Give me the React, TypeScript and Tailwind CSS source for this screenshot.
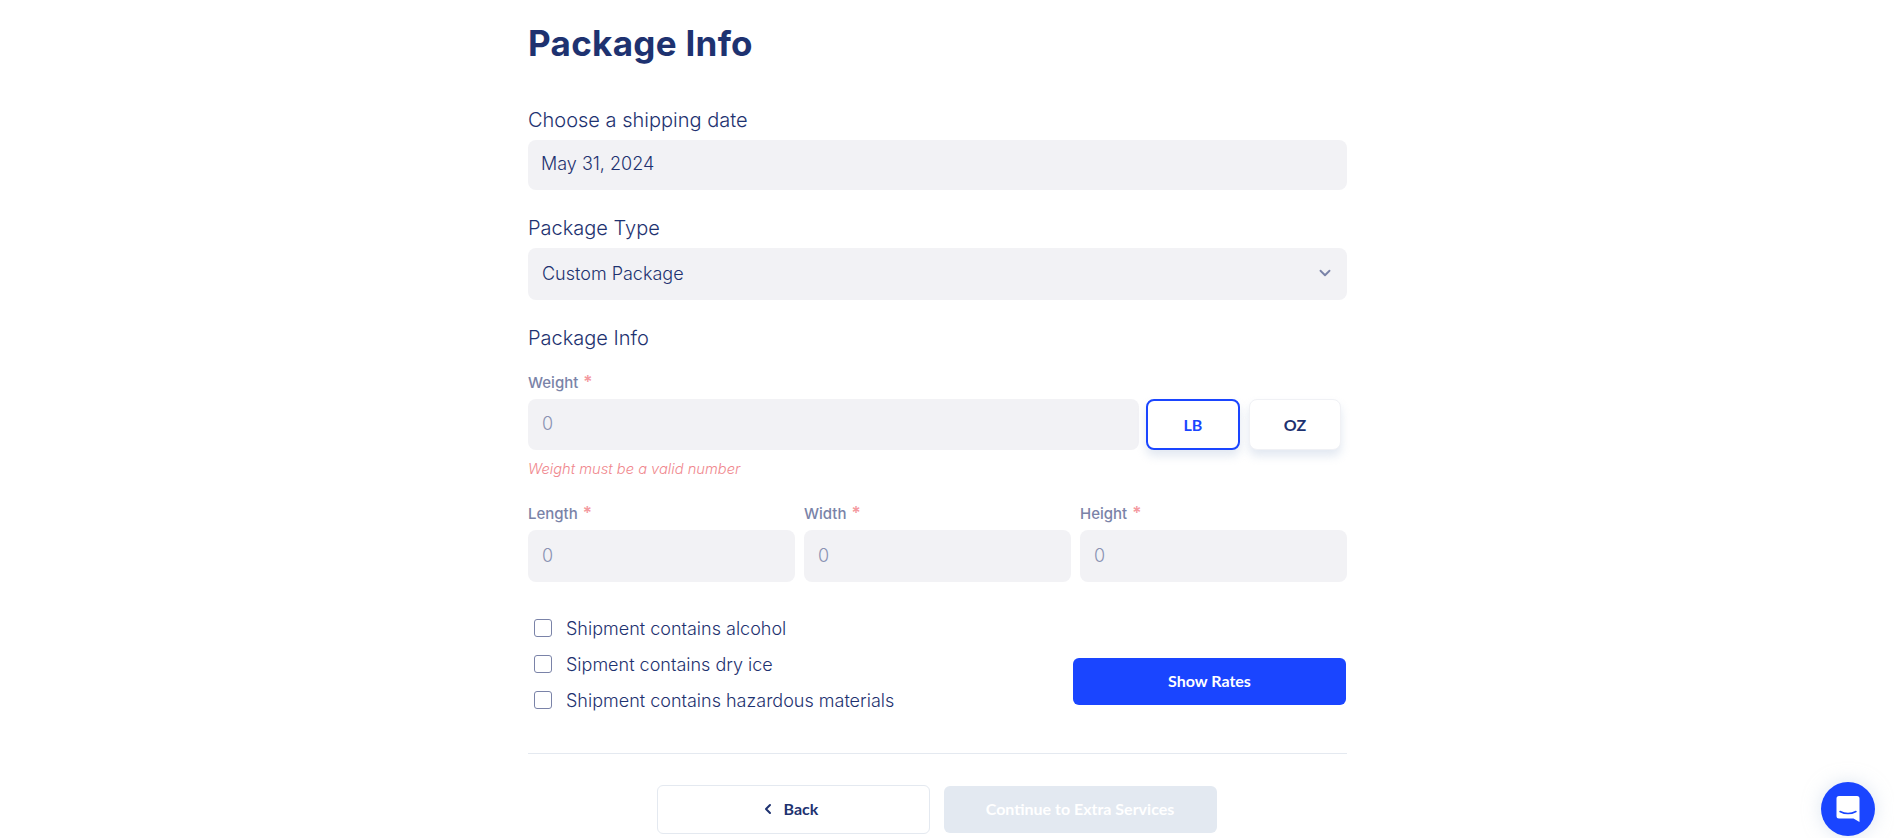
import { ChevronDown, ChevronLeft } from "lucide-react";

const inter = "font-['Inter',sans-serif]";
const display = "font-['Lato',sans-serif]";

const Label = ({ children }: { children: string }) => (
  <div className="text-[20px] leading-[24px] font-light text-[#1e3270]">{children}</div>
);

const SmallLabel = ({ children }: { children: string }) => (
  <div className="h-[17px] text-[15px] leading-[17px] font-medium text-[#7a83a8]">
    {children} <span className="ml-[1px] text-[17px] font-semibold text-[#f49a9f]">*</span>
  </div>
);

const Field = ({ children, className = "" }: { children: React.ReactNode; className?: string }) => (
  <div className={`flex items-center rounded-lg bg-[#f2f2f5] px-[14px] pb-[2px] text-[18px] font-light ${className}`}>
    {children}
  </div>
);

const NumberField = ({ label }: { label: string }) => (
  <div className="flex flex-1 flex-col gap-[8px]">
    <SmallLabel>{label}</SmallLabel>
    <Field className="h-[52px] text-[#8b93b3]">0</Field>
  </div>
);

const Check = ({ label }: { label: string }) => (
  <label className="flex h-[36px] items-center gap-[14px] pl-[6px] text-[18px] font-light text-[#1e3270]">
    <span className="h-[18px] w-[18px] rounded-[3px] border border-[#7a83a8] bg-white" />
    {label}
  </label>
);

export default function App() {
  return (
    <div className={`relative h-[838px] overflow-hidden bg-white ${inter}`}>
      <div className="ml-[528px] flex w-[819px] flex-col pt-[20px]">
        <h1 className="text-[35px] leading-[46px] font-bold tracking-[0.3px] text-[#1e3270]">Package Info</h1>

        <div className="mt-[42px]">
          <Label>Choose a shipping date</Label>
        </div>
        <Field className="mt-[8px] h-[50px] !px-[13px] !pb-[3px] text-[#1e3270]">May 31, 2024</Field>

        <div className="mt-[26px]">
          <Label>Package Type</Label>
        </div>
        <Field className="mt-[8px] h-[52px] justify-between text-[#1e3270]">
          <span>Custom Package</span>
          <ChevronDown size={18} strokeWidth={2.5} className="-mr-[1px] text-[#7a83a8]" />
        </Field>

        <div className="mt-[26px]">
          <Label>Package Info</Label>
        </div>

        <div className="mt-[24px]">
          <SmallLabel>Weight</SmallLabel>
        </div>
        <div className="mt-[8px] flex items-start">
          <Field className="h-[51px] w-[611px] text-[#8b93b3]">0</Field>
          <button className={`${display} ml-[7px] h-[51px] w-[94px] rounded-lg border-2 border-[#1a45ff] bg-white text-[16px] font-bold text-[#1a45ff] shadow-[0_6px_10px_rgba(190,205,225,0.45)]`}>
            LB
          </button>
          <button className={`${display} ml-[9px] h-[51px] w-[92px] rounded-lg border border-[#f0f1f5] bg-white text-[16px] font-bold text-[#1e3270] shadow-[0_6px_10px_rgba(190,205,225,0.45)]`}>
            OZ
          </button>
        </div>
        <div className="mt-[10px] text-[14.7px] leading-[18px] font-light text-[#f0888e] italic">
          Weight must be a valid number
        </div>

        <div className="mt-[27px] flex gap-[9px]">
          <NumberField label="Length" />
          <NumberField label="Width" />
          <NumberField label="Height" />
        </div>

        <div className="mt-[28px] flex items-end justify-between">
          <div className="flex flex-col">
            <Check label="Shipment contains alcohol" />
            <Check label="Sipment contains dry ice" />
            <Check label="Shipment contains hazardous materials" />
          </div>
          <button className={`${display} mr-[1px] mb-[13px] h-[47px] w-[273px] rounded-md bg-[#1a45ff] pb-[2px] text-[16px] font-bold text-white`}>
            Show Rates
          </button>
        </div>

        <div className="mt-[35px] h-px bg-[#e4e9f0]" />

        <div className="mt-[31px] flex items-start justify-center gap-[14px] pr-[2px]">
          <button className={`${display} flex h-[49px] w-[273px] items-center justify-center gap-[8px] rounded-md border border-[#e4e9f0] bg-white pr-[8px] pb-[2px] text-[16px] font-bold text-[#1e3270]`}>
            <ChevronLeft size={16} strokeWidth={3} />
            Back
          </button>
          <button className={`${display} mt-[1px] h-[47px] w-[273px] rounded-md bg-[#e3e9f1] pb-[2px] text-[16px] font-bold text-white`}>
            Continue to Extra Services
          </button>
        </div>
      </div>

      <div className="absolute top-[782px] left-[1821px] flex h-[54px] w-[54px] items-center justify-center rounded-full bg-[#1a45ff] shadow-[0_0_18px_rgba(190,205,225,0.5)]">
        <svg width="24" height="28" viewBox="0 0 24 28">
          <path
            d="M3 1h18a2.500 2.500 0 0 1 2.500 2.500V27l-6-3.500H3A2.500 2.500 0 0 1 .5 21V3.500A2.500 2.500 0 0 1 3 1z"
            fill="#fff"
          />
          <path d="M4 16.500c5 2.600 11 2.600 16 0" fill="none" stroke="#1a45ff" strokeWidth="1.500" strokeLinecap="round" />
        </svg>
      </div>
    </div>
  );
}
